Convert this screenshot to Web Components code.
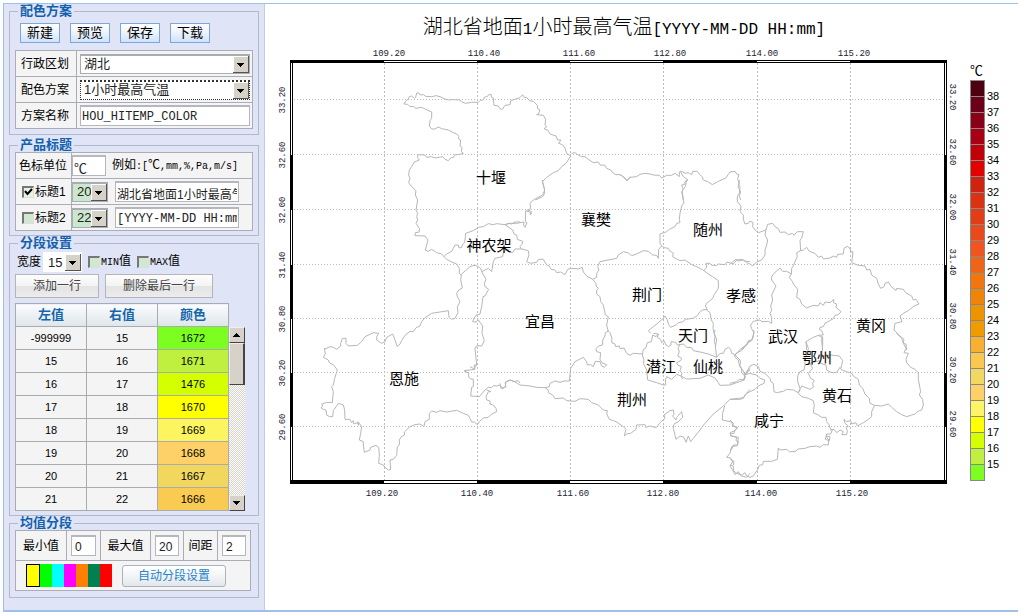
<!DOCTYPE html>
<html lang="zh-CN">
<head>
<meta charset="utf-8">
<title>湖北省地面1小时最高气温</title>
<style>
body{margin:0;background:#fff;color:#000;font:12px/16px "Liberation Sans","Noto Sans CJK SC",sans-serif}
</style>
</head>
<body>
<app-shell>
  <div slot="side">
    <scheme-form></scheme-form>
    <title-form></title-form>
    <segment-form></segment-form>
    <average-form></average-form>
  </div>
  <temp-chart></temp-chart>
</app-shell>
<script>
const shared = `
*{box-sizing:border-box}
:host{display:block}
.rows{border:1px solid #aaadb5;background:#f4f4f4}
.row{box-sizing:content-box;display:grid;min-height:25px}
.row + .row{border-top:1px solid #aaadb5}
.row > *{display:flex;align-items:center;min-width:0}
.row > * + .cell,.row > .cell.line{border-left:1px solid #aaadb5}
input,select,button{font:inherit;color:#222;margin:0;border-radius:0;min-width:0}
input:not([type=checkbox]){width:100%;height:21px;padding:2px 1px 0;border:1px solid #b4b6c0;border-top:2px solid #b4b6c0;background:#fff;outline:0}
.mono{font-family:"Liberation Mono","Noto Sans CJK SC",monospace}
select{appearance:none;height:20px;padding:0 20px 0 3px;border:1px solid #a9acb5;border-top-width:2px;outline:0;font-size:13px;
 background:#fff url('data:image/svg+xml,<svg xmlns="http://www.w3.org/2000/svg" width="16" height="17"><path fill="%23d6d2c8" d="M0 0h16v17H0z"/><path fill="%23fff" d="M0 0h15v1H1v15H0z"/><path fill="%23555" d="M15 0h1v17H0v-1h15z"/><path d="M4 7h7v1h-1v1H9v1H8v1H7v-1H6V9H5V8H4z"/></svg>') right 0 top 0 no-repeat}
input[type=checkbox]{appearance:none;width:12px;height:12px;flex:none;border:1px solid #ddd;border-top:2px solid #777;border-left:2px solid #777;background:#cfe8cf}
input[type=checkbox]:checked{background:#e4f4e4 url('data:image/svg+xml,<svg xmlns="http://www.w3.org/2000/svg" width="9" height="9"><path d="M1 3l2.500 3L8 1" fill="none" stroke="%23000" stroke-width="2"/></svg>')}
label{white-space:nowrap}
`;
function define(name, css, html, setup){
  customElements.define(name, class extends HTMLElement{
    constructor(){
      super();
      const root = this.attachShadow({mode:'open'});
      root.innerHTML = `<style>${shared}${css}</style>${html}`;
      if(setup) setup(root, this);
    }
  });
}

define('group-box', `
fieldset{margin:0;min-width:0;border:1px solid #b3b9c9;padding:var(--pad,0) 5px var(--pad-end,5px)}
legend{margin-left:3px;padding:0 2px;font:bold 13px/14px "Liberation Sans","Noto Sans CJK SC",sans-serif;color:#1360ad}
`, `<fieldset><legend></legend><slot></slot></fieldset>`, (root, el) => {
  root.querySelector('legend').textContent = el.getAttribute('label');
});

define('app-shell', `
:host{display:grid;grid-template-columns:261px 1fr;margin:3px 2px 3px 3px;min-height:calc(100vh - 6px);border:1px solid #9fc0e8;border-right:0;border-bottom-width:2px}
.side{background:#dfe5f7;border-right:1px solid #c3cbe0;padding:0 5px}
main{min-width:0}
`, `<div class="side"><slot name="side"></slot></div><main><slot></slot></main>`);

define('scheme-form', `
group-box{--pad:5px}
.bar{display:flex;gap:10px;padding:0 5px;margin-bottom:7px}
.bar button{width:40px;height:20px;padding:0;border:1px solid #7da7da;background:linear-gradient(#fff,#eef4fd 45%,#cfe2fb);font-size:13px;line-height:16px;color:#000}
.row{grid-template-columns:60px 1fr}
.row label{padding-left:5px}
.row .cell{padding:0 2px 0 3px}
select{width:100%;font-size:13px}
.focus{border:1px dotted #333;border-top:2px dotted #333}
input{font-size:12px}
`, `<group-box label="配色方案">
<div class="bar"><button>新建</button><button>预览</button><button>保存</button><button>下载</button></div>
<div class="rows">
<div class="row"><label for="area">行政区划</label><div class="cell"><select id="area"><option>湖北</option></select></div></div>
<div class="row"><label for="plan">配色方案</label><div class="cell"><select id="plan" class="focus"><option>1小时最高气温</option></select></div></div>
<div class="row"><label for="name">方案名称</label><div class="cell"><input id="name" class="mono" value="HOU_HITEMP_COLOR"></div></div>
</div></group-box>`);

define('title-form', `
:host{margin-top:3px}
group-box{--pad-end:4px}
.row{grid-template-columns:55px 1fr}
.row > label{padding-left:3px;gap:2px}
.row > .check{padding-left:6px;gap:1px}
.cell{gap:7px;padding:0 13px 0 0}
.unit{padding-left:0;gap:6px;padding-right:0}
#unit{width:34px;flex:none;font-size:13px}
.tip{font-size:12px;white-space:nowrap}
.tip .mono{font-size:10px}
select{width:36px;flex:none;background-color:#cbe7cd;padding:0 16px 0 4px}
#t1{font-size:12px}
#t2{font-size:12px}
`, `<group-box label="产品标题"><div class="rows">
<div class="row"><label for="unit">色标单位</label><div class="cell unit"><input id="unit" value="℃"><span class="tip">例如<span class="mono">:[<span style="font-size:12px">℃</span>,mm,%,Pa,m/s]</span></span></div></div>
<div class="row"><label class="check"><input type="checkbox" checked>标题1</label><div class="cell"><select aria-label="标题1字号"><option>20</option></select><input id="t1" aria-label="标题1" value="湖北省地面1小时最高气温"></div></div>
<div class="row"><label class="check"><input type="checkbox">标题2</label><div class="cell"><select aria-label="标题2字号"><option>22</option></select><input id="t2" class="mono" aria-label="标题2" value="[YYYY-MM-DD HH:mm]"></div></div>
</div></group-box>`);

define('segment-form', `
group-box{--pad:2px;--pad-end:4px}
.bar{display:flex;align-items:center;height:20px;padding-left:2px;margin-bottom:2px}
.bar select{width:39px;margin:0 6px 0 2px;padding:0 16px 0 4px;border-color:#fff}
.bar .check{display:flex;align-items:center;gap:1px;margin-right:6px;font-size:12px}
.mono{font-size:10px}
.acts{display:flex;gap:6px;margin-bottom:5px}
.acts button{height:24px;padding:0;width:84px;border:1px solid #b5b5b5;background:linear-gradient(#fdfdfd,#f3f3f3 50%,#e4e4e4 52%,#ececec);font-size:12px;color:#444}
.acts .wide{width:108px}
.list{display:flex}
table{width:214px;border-collapse:collapse;table-layout:fixed;background:#f4f4f4}
th,td{border:1px solid #a8acae;padding:0;text-align:center;font-size:11px;line-height:16px}
tr{height:23px}
th{font-size:13px;color:#1565ad;background:linear-gradient(#fafcfd,#dfe6ea)}
.scroll{display:flex;flex-direction:column;width:16px;margin-top:24px;background:repeating-conic-gradient(#d6d2c8 0 25%,#fff 0 50%) 0 0/2px 2px}
.scroll > *{padding:0;border:1px solid;border-color:#eee #444 #444 #eee;background:#d6d2c8}
.scroll button{height:16px;display:grid;place-items:center}
.thumb{height:42px;margin-bottom:auto;border-right-width:2px}
`, `<group-box label="分段设置">
<div class="bar"><label for="w">宽度</label><select id="w"><option>15</option></select>
<label class="check"><input type="checkbox"><span><span class="mono">MIN</span>值</span></label>
<label class="check"><input type="checkbox"><span><span class="mono">MAX</span>值</span></label></div>
<div class="acts"><button>添加一行</button><button class="wide">删除最后一行</button></div>
<div class="list"><table><thead><tr><th>左值</th><th>右值</th><th>颜色</th></tr></thead><tbody></tbody></table>
<div class="scroll"><button aria-label="向上"><svg width="8" height="5"><path d="M0 4h7v-1h-1v-1h-1v-1h-1V0H3v1H2v1H1v1H0z"/></svg></button><div class="thumb"></div><button aria-label="向下"><svg width="8" height="5"><path d="M0 0h7v1h-1v1h-1v1h-1v1H3V3H2V2H1V1H0z"/></svg></button></div></div>
</group-box>`, root => {
  root.querySelector('tbody').innerHTML = [
    [-999999,15,1672,'#7cff20'],[15,16,1671,'#bff040'],[16,17,1476,'#d4ff00'],[17,18,1670,'#ffff00'],
    [18,19,1669,'#fcf560'],[19,20,1668,'#fed068'],[20,21,1667,'#f2d75f'],[21,22,1666,'#facb52']
  ].map(([l,r,c,bg]) => `<tr><td>${l}</td><td>${r}</td><td style="background:${bg}">${c}</td></tr>`).join('');
});

define('average-form', `
group-box{--pad-end:6px}
.row{min-height:29px;grid-template-columns:50px 34px 50px 33px 34px 1fr}
.rows{margin-right:2px}
.row label{justify-content:center}
.cell{padding:0 4px}
.row label.cell{padding:0}
.cell input{font-size:12px;padding-left:3px}
.colors{display:flex;align-items:center;padding-left:10px;min-height:29px}
.colors i{width:12px;height:23px}
.colors i:first-child{width:14px;border:1px solid #000}
.colors button{width:104px;height:22px;margin-left:10px;padding:0;border:1px solid #a9b2bd;border-radius:3px;background:linear-gradient(#fff,#f2f4f6 50%,#e2e7ec);color:#2585c9;font-size:12px}
`, `<group-box label="均值分段"><div class="rows">
<div class="row"><label for="a">最小值</label><div class="cell"><input id="a" value="0"></div><label class="cell" for="b">最大值</label><div class="cell"><input id="b" value="20"></div><label class="cell" for="c">间距</label><div class="cell"><input id="c" value="2"></div></div>
<div class="row" style="display:block"><div class="colors"></div></div>
</div></group-box>`, root => {
  root.querySelector('.colors').innerHTML = ['#ff0','#0f0','#0ff','#f0f','#ff8000','#008050','#f00']
    .map(c => `<i style="background:${c}"></i>`).join('') + '<button>自动分段设置</button>';
});

define('temp-chart', `
:host{padding:8px 8px 0 7px}
h1{height:28px;margin:0 48px 0 14px;text-align:center;font:300 20px/28px "Noto Sans CJK SC",sans-serif;white-space:nowrap}
h1 .mono{font-size:16px;line-height:16px;font-weight:400}
.body{display:grid;grid-template-columns:1fr 48px;margin-top:4px}
`, `<h1>湖北省地面<span class="mono">1</span>小时最高气温<span class="mono">[YYYY-MM-DD HH:mm]</span></h1>
<div class="body"><hubei-map></hubei-map><color-scale></color-scale></div>`);

define('color-scale', `
:host{padding:19px 0 0 8px}
.unit{font-size:13px;line-height:16px}
.cols{display:flex;gap:2px;margin-top:1px}
.bar{width:15px;border:1px solid #888;border-top:0}
.bar i{display:block;height:16px;border-top:1px solid #888}
.nums{padding-top:8px;font-size:11px;line-height:16px}
.nums span{display:block}
`, `<div class="unit">℃</div><div class="cols"><div class="bar"></div><div class="nums"></div></div>`, root => {
  root.querySelector('.bar').innerHTML = ['#4f0010','#6c0018','#8b0019','#a80012','#c10008','#e20000','#d02210','#db3213','#e33d17','#e84a1b','#f0551f','#ee6518','#f2750e','#f08408','#ee9400','#f09c00','#f7b030','#f9c850','#f0d862','#fdd068','#fdf565','#ffff00','#d4ff00','#bff040','#7cff20']
    .map(c => `<i style="background:${c}"></i>`).join('');
  let s = '';
  for(let n = 38; n >= 15; n--) s += `<span>${n}</span>`;
  root.querySelector('.nums').innerHTML = s;
});

/* Boundary survey sheets: origin of the sheet on the map, then its lines at three units to a map unit. */
const sheets = [
[280,0,[
'372,312 377,303 385,297 388,290 395,288 403,295 407,292 410,279 417,279 420,285 430,284 437,289 455,290 468,287 480,290 493,296 505,300 520,299 540,300 545,306 557,310 575,307 595,307 601,301 610,300 614,291 622,290 626,284 634,284 634,291 640,294 642,316 655,318 660,326 667,328 675,316 690,314 692,302 710,296 720,293 728,284 733,293 740,292 748,302 760,304 772,316 773,326 780,330 775,342 770,344 790,346 797,358 795,375 800,381 792,386 805,392 810,402 828,408 833,420 843,420 836,430 847,434 855,444 860,460 872,468',
'372,312 383,313 390,320 400,319 408,325 425,322 437,328 455,336 455,355 450,362 448,378 455,387 465,387 475,381 485,386 505,390 520,398 530,402 537,410 535,416 542,420 540,438 546,443 544,454 550,460 535,464 525,464 520,472 512,474 505,482 495,478 488,470 465,474 455,470 440,472 435,465 415,464 412,472 418,480 403,486 395,500 388,510 386,525 390,535 386,548 397,562 408,572 406,585 413,600',
'872,468 858,490 845,500 835,512 820,518 810,525 800,532 787,545 793,565 794,580 788,590 766,600',
'875,460 885,458 893,464 905,470 915,470 925,478 940,488 955,486 960,495 975,496 980,505 992,510 1000,520 1008,524 1020,524 1030,530 1040,542 1045,538 1050,530']],
[620,0,[
'0,524 12,532 22,542 30,532 50,530 60,523 75,520 90,522 100,525 118,526 125,534 140,526 155,526 165,520 178,530 178,516 185,514 195,520 205,518 215,524 218,514 232,514 238,522 246,530 250,540 265,546 277,554 295,544 318,534 324,524 330,516 345,514 350,522 357,524 353,536 358,550 354,560 362,576 358,586 362,600',
'182,516 190,530 204,540 195,545 195,552 185,555 189,565 187,575 190,600']],
[270,190,[
'443,30 438,60 443,70 440,80 443,90 438,100 448,115 448,126 436,128 435,137 465,138 474,150 466,180 475,184 485,178 500,188 515,192 522,200 530,208 545,216 560,222 568,235 568,250 574,256 572,270 577,294 566,300 560,310 562,320 570,335 562,350 564,368 555,385 545,388 537,382 535,362 510,366 485,370 465,383 455,395 450,408 438,413 430,425 420,424 405,436 395,452 390,462 382,470 375,450 368,432 350,442 345,455 335,460 320,450 320,440 326,430 310,428 285,440 275,455 262,466 235,468 228,460 228,445 217,445 212,460 212,468 200,478 190,472 180,470 163,478',
'522,200 530,192 545,184 555,165 565,165 567,174 575,172 577,164 584,158 587,130 610,122 625,112 640,110 655,101 670,104 680,101 705,104 715,100 725,102 735,96 750,96',
'635,245 632,235 622,228 612,226 600,230 572,255',
'635,245 648,268 643,280 645,290 656,298 645,318 639,320 635,350 630,372 618,376 612,385 608,395 618,396 625,390 638,408 636,430 643,452 635,468 620,467 615,475']],
[500,180,[
'127,0 131,20 134,30 128,45 100,60 90,70 92,86 82,90 94,94 90,104 96,100 88,96 77,92 76,125 81,128 75,142 71,136 72,126 50,130 30,130 15,134',
'15,134 38,150 42,162 50,165 52,178 68,184 66,193 60,200 65,207 45,207 38,218 28,216 25,208 18,208 10,220 8,230 -15,235 -20,245 -25,275 -35,265 -55,275',
'65,207 85,212 87,225 80,245 92,250 110,247 115,238 130,238 140,255 148,258 153,268 165,270 170,278 182,276 195,284 203,268 215,265 235,267 247,262 250,276 260,288 278,298 290,292 290,280 297,270 293,260 300,245 325,240 350,235 355,225 370,215 385,219 395,227 410,222 430,212 445,214 458,225 470,226 475,235 476,208 485,198 480,190 480,162 500,155 508,148 525,140 530,130 540,128 538,118 540,100 546,75 552,70 545,35 556,20 560,0',
'278,298 288,310 288,318 295,325 290,330 290,342 300,350 302,365 310,375 316,405 325,410 320,435 325,455',
'485,198 492,203 505,205 510,213 520,220 518,230 530,237 540,242 555,240 575,254 590,260 605,268 612,272 625,282 638,290 655,302 655,325 643,343 638,355 620,370 616,378 622,388 608,390 600,395 592,407 580,415 555,418 550,425 535,428 530,434 512,442 506,434 502,420 495,408 490,415 475,428 460,440 445,452 452,460',
'612,272 620,262 618,250 630,250 635,256 650,256 655,252 675,254 680,246 700,252 710,240 725,238 735,243 750,245',
'618,388 630,398 634,420 640,430 639,445 645,470 643,485 648,500']],
[730,180,[
'28,0 26,12 30,22 28,40 22,50 22,65 33,78 30,95 40,105 40,118 45,132 55,130 60,123 69,128 68,140 75,150 85,158 108,150 113,133 128,130 135,140 145,146 150,157 165,156 175,164 188,160 192,166 202,155 220,155 215,175 210,180 212,212',
'108,148 105,165 113,180 110,195 105,210 105,225 95,240 80,246 68,258 60,252 50,248 40,240 25,243 18,238 8,245 3,252',
'212,212 220,210 230,202 238,214 255,220 265,232 275,228 280,237 300,234 310,228 320,232 323,223 340,222 342,205 352,199 360,205 362,215 369,215 367,235 365,248 385,256 405,258 410,270 420,268 425,285 440,295 445,312 452,325 462,320 465,310 475,306 482,318 498,332 500,325 520,328 527,338 545,348 550,360 558,358 567,372 552,378 535,392 520,400 510,408 516,425 495,430 492,450 510,468 522,478 520,490 528,492 530,510',
'212,212 200,218 202,230 195,245 190,258 185,265 184,282 170,274 158,274 150,264 132,280 125,290 125,300 138,318 125,345 128,360 122,378 125,392 120,400 125,412 125,430 115,424 95,425 90,420 70,424 62,435 64,445 72,458 65,480 55,482 52,494 42,500 35,510',
'184,282 178,292 187,304 190,312 203,328 200,352 210,358 215,372 230,384 250,376 265,378 270,368 280,376 285,366 300,368 312,358 310,368 320,372 318,382 333,395 325,404 315,406 310,416 285,430 280,440 270,442 268,448 275,452 280,465 265,466 250,472 228,485 230,510',
'265,467 276,470 275,480 278,510']],
[270,330,[
'163,54 166,72 160,82 175,90 178,98 192,106 202,120 194,145 190,165 185,170 190,185 187,218 172,217 155,222 158,228 153,234 160,238 168,240 170,255 178,260 188,260 190,242 205,220 220,225 224,240 225,268 240,268 245,278 250,272 252,282 262,278 266,286 264,275 275,290 272,310 268,330 280,335 280,345 283,367 300,360 302,352 318,346 326,352 328,375 326,400 340,405 345,412 355,420 362,418 360,390 370,388 380,376 382,350 388,345 388,330 394,320 404,315 403,306 420,290 435,284 450,282 462,290 465,275 478,268 478,250 485,243 500,247 510,242 530,246 560,241 580,250 595,256 600,265 605,276 613,276 622,284 628,275 640,264 655,262 665,252 680,245 678,235 670,225 660,222 660,213 650,210 648,200 655,185 662,185 650,180',
'620,50 615,55 618,85 620,105 612,105 615,118 582,122 597,130 595,138 600,146 610,148 610,170 605,172 602,198 628,200 645,180 655,172 665,173 670,167 682,168 690,165 698,176 708,170 705,158 720,150 732,155 745,152 750,160',
'600,110 612,116 620,105']],
[500,330,[
'0,160 3,175 15,172 18,155 30,150 42,154 60,165 90,168 110,172 135,173 148,170 150,160 165,153 180,157 192,153 208,153 212,115 225,95 250,82 260,95 262,105 272,104 280,110 286,94 300,95 305,108 313,112 320,104 305,98 300,88 302,68 290,65 288,56 296,48 308,45 308,30 315,18 316,8 325,3 330,8 336,25 335,38 345,42 347,50 358,48 360,56 372,54 380,70 390,76 400,70 428,72',
'460,10 475,12 468,20 458,15 454,35 442,38 437,55 430,58 427,75 432,90 430,100 440,120 443,150 470,158 490,165 497,165 496,150 500,140 515,148 530,133 543,138 548,148',
'475,12 472,22 482,28 485,38 492,32 498,45 505,50 513,45 513,35 527,37 532,45 550,42 560,52 575,53 580,62 600,66 625,72 650,82',
'540,42 534,55 538,65 533,78 545,85 542,92 530,98 533,105 544,110 540,122 546,130 543,138 560,147 600,145 625,135 645,144 655,158 660,166 690,165 710,158 733,150 736,140 725,128 725,115 718,105 715,90 705,82 702,72 695,70 692,58 685,52 675,58 670,70 660,70 650,82 646,50 650,30 643,10 645,0',
'705,76 715,66 720,58 735,48 750,30',
'733,150 735,130 742,128 750,115',
'135,173 145,180 145,188 158,195 165,206 190,204 200,212 225,214 240,206 265,208 275,218 295,225 310,240 322,242 320,252 328,268 340,272 350,276 370,290 378,298 373,318 380,312 392,310 408,298 410,285 435,284 437,292 450,288 465,292 470,292 480,278 495,265 492,255 510,242 520,240 522,252 518,258 528,270 530,262 545,245 548,262 535,275 522,282 520,295 528,328 540,318 552,322 558,337 565,318 572,335 580,325 600,300 615,280 640,252 670,228 690,208 720,208 730,205 735,195 750,178',
'674,228 668,250 667,270 695,276 698,286 712,292 705,302 690,308 692,318 710,322 708,332 715,335 712,347 695,350 690,370 680,382 692,384 698,396 690,408 698,420 705,434 715,425 722,437 740,442 750,430']],
[730,330,[
'0,208 25,205 40,203 50,190 75,178 85,168 102,160 104,150 90,145 80,135 58,130 45,135 60,108 72,103 85,110 90,124 105,130 120,145 122,155 130,160 132,185 140,188 160,184 170,178 190,180 205,188 212,175 215,168 240,178 250,172 248,160 253,152 242,145 235,130 248,115 240,100 225,105 222,120 210,125 203,138 203,155 210,175 205,190 215,200 235,205 250,212 253,225 250,248 265,255 275,262 288,262 290,275 298,285 300,295 307,300 302,312 290,312 286,328 298,332 300,320 288,318 296,330 295,345 280,344 270,352 260,348 240,350 225,355 205,357 195,365 178,365 170,358 150,360 145,354 142,388 125,394 100,394 98,404 88,406 82,420 70,438 60,442 50,438 45,428 35,435 20,430 10,422 10,408 0,405',
'300,300 312,298 320,308 330,300 340,305 335,314 350,314 352,302 348,292 355,288 345,280 342,268 350,275 362,272 365,282 378,278 382,288 400,278 415,268 425,260 425,245 434,226 420,220 418,205 405,192 398,175 388,165 385,148 370,138 365,130 350,125 335,120 330,112 320,127 310,128 300,126 290,120 288,105 272,100 268,92 240,100 225,105',
'300,75 328,78 338,92 333,115',
'434,226 455,228 475,222 485,232 500,245 515,254 530,260 545,255 555,252 562,245 575,240 580,225 578,208 568,195 572,185 565,148 565,128 555,118 542,112 530,98 528,88 535,70 522,68 528,55 520,40 515,25 500,10',
'15,75 20,68 35,62 45,50 52,40 65,32 70,20 72,0',
'15,75 30,90 32,100 28,108 38,120 45,135 50,125 60,120',
'0,160 20,155 28,148 40,150 45,138',
'228,35 235,55 232,75 225,80 225,105','278,20 278,45 275,80 300,75',
'0,270 10,280 8,288 22,294 15,300 12,310 0,312','0,315 12,320 25,322 22,345 10,345 5,358 0,358','0,386 12,394 10,405']]
];

define('hubei-map', `
svg{display:block;width:100%;height:auto}
.grid{stroke:#bdbdbd;fill:none}
.border{stroke:#b6b6b6;fill:none;stroke-width:3;stroke-linejoin:round}
text{text-anchor:middle}
.axis{font:9px "Liberation Mono",monospace;fill:#223}
.city{font:15px "Noto Sans CJK SC",sans-serif}
`, `<svg viewBox="272 44 690 456" role="img" aria-label="湖北省地图"></svg>`, root => {
  const xs = [384,477,570,663,757,850], ys = [99,154,209,264,318,372,426];
  const lon = ['109.20','110.40','111.60','112.80','114.00','115.20'];
  const lat = ['33.20','32.60','32.00','31.40','30.80','30.20','29.60'];
  const top = [389,484,579,670,762,854], bottom = [382,477,573,663,761,852];
  let s = '';
  xs.forEach(x => s += `<path class="grid" stroke-dasharray="2 2" d="M${x + .5} 63V480"/>`);
  ys.forEach(y => s += `<path class="grid" stroke-dasharray="1 2" d="M294 ${y + .5}H944"/>`);
  sheets.forEach(([x,y,lines]) => {
    s += `<g class="border" transform="translate(${x} ${y}) scale(.33333)">` +
      lines.map(l => `<polyline points="${l}"/>`).join('') + '</g>';
  });
  s += '<g shape-rendering="crispEdges"><path fill-rule="evenodd" d="M290 60H947V484H290z M291 61V483H946V61z M292 62H945V481H292z M293 63V480H944V63z"/>';
  [[290,384],[477,570],[663,757],[850,946]].forEach(([a,b]) => s += `<path d="M${a} 60H${b}V63H${a}z M${a} 480H${b}V484H${a}z"/>`);
  [[155,210],[265,319],[373,427]].forEach(([a,b]) => s += `<path d="M290 ${a}H293V${b}H290z M944 ${a}H947V${b}H944z"/>`);
  s += '</g>';
  lon.forEach((t,i) => s += `<text class="axis" x="${top[i]}" y="56">${t}</text><text class="axis" x="${bottom[i]}" y="496">${t}</text>`);
  lat.forEach((t,i) => s += `<text class="axis" transform="translate(285 ${ys[i] + 1}) rotate(-90)">${t}</text><text class="axis" transform="translate(950 ${ys[i] - 2}) rotate(90)">${t}</text>`);
  [['十堰',491,177],['襄樊',596,219],['随州',708,229],['神农架',489,245],['荆门',647,294],['孝感',741,295],['宜昌',540,321],['天门',693,335],['武汉',783,336],['黄冈',871,325],['鄂州',817,357],['恩施',404,378],['潜江',661,366],['仙桃',708,366],['荆州',632,399],['黄石',837,395],['咸宁',769,420]]
    .forEach(([t,x,y]) => s += `<text class="city" x="${x}" y="${y + 6}">${t}</text>`);
  root.querySelector('svg').innerHTML = s;
});
</script>
</body>
</html>
